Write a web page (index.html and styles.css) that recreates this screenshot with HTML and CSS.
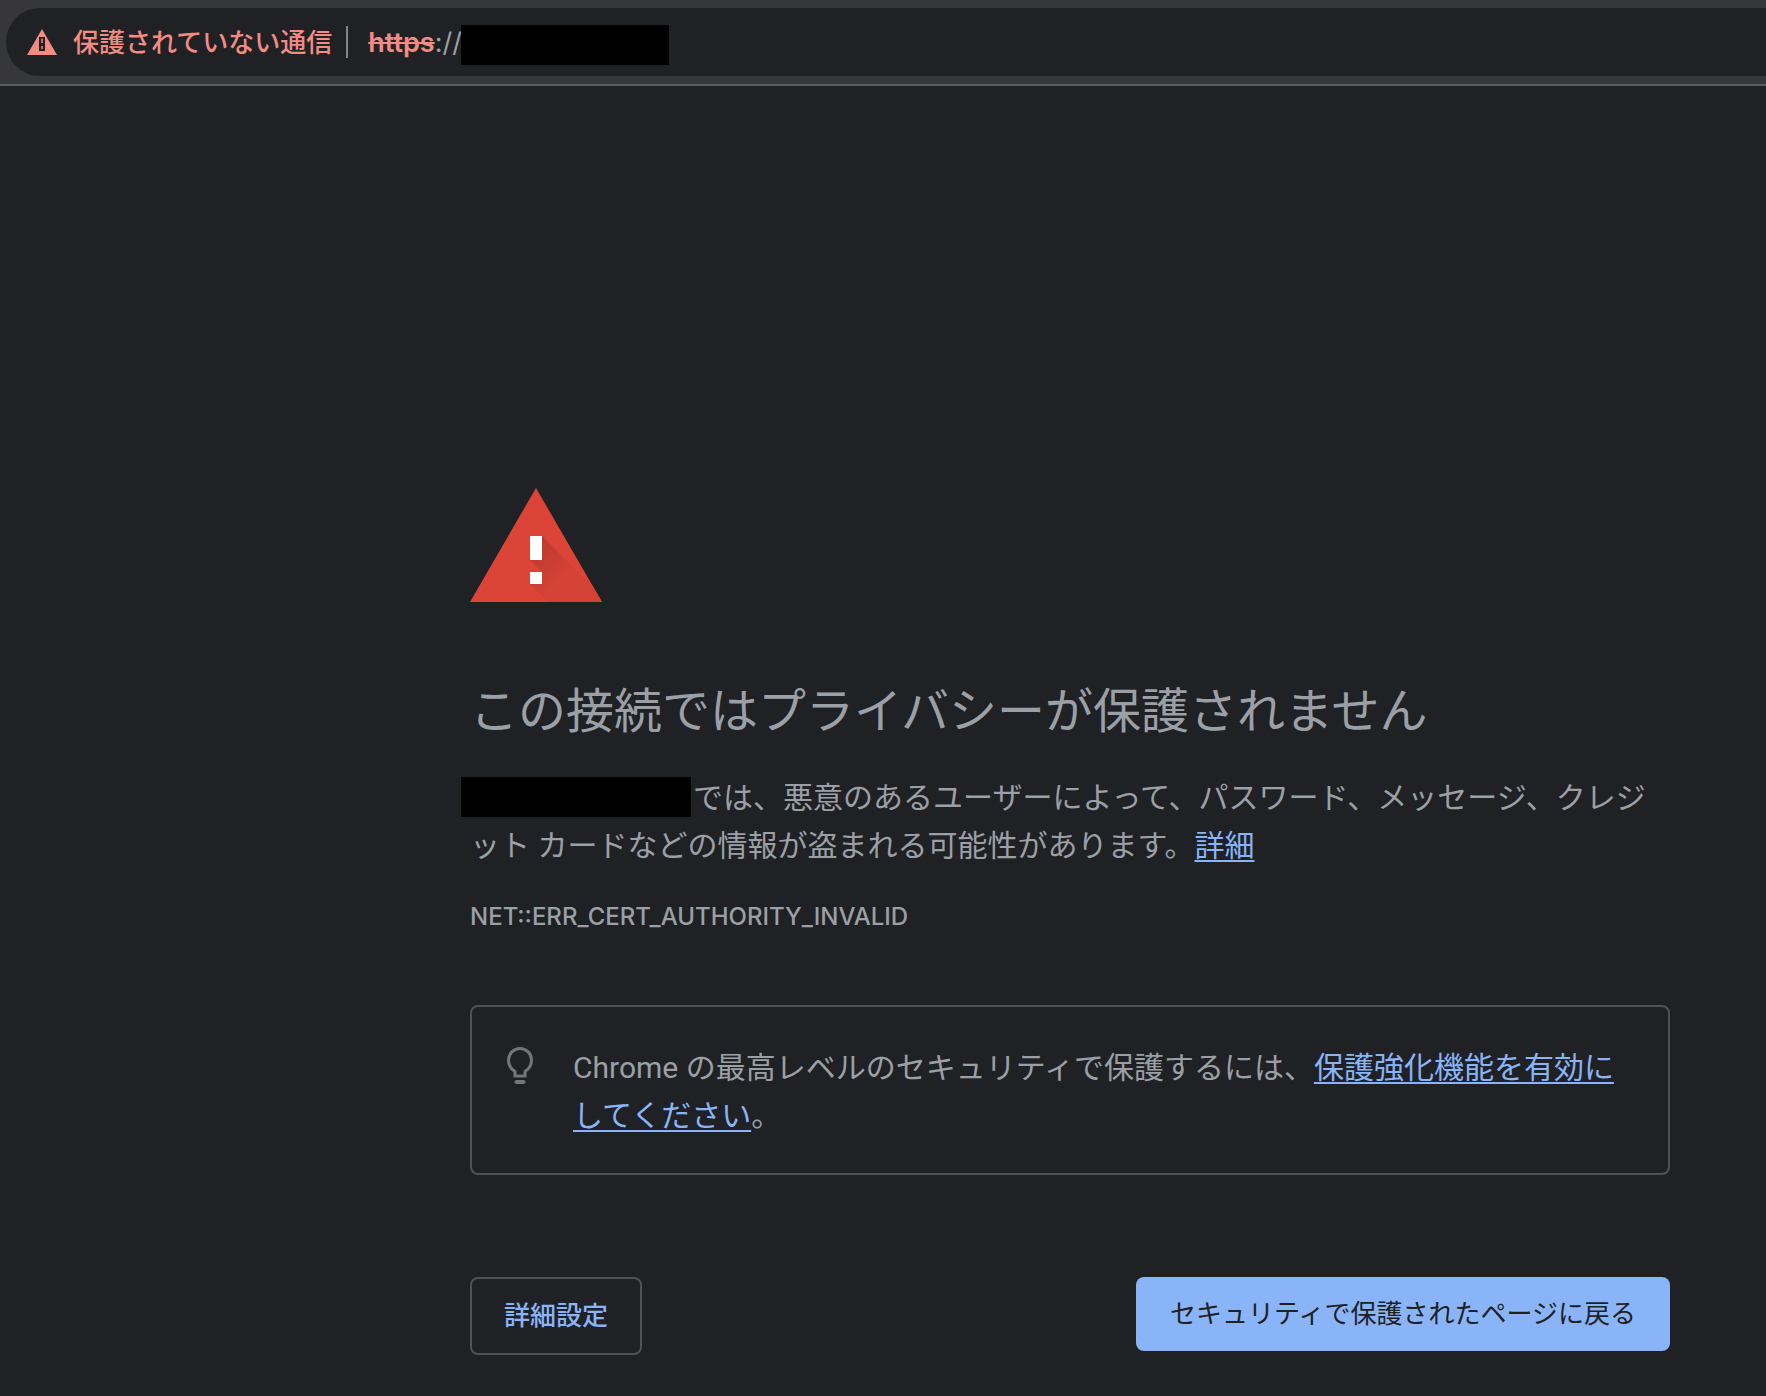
FILE: index.html
```html
<!DOCTYPE html>
<html lang="ja">
<head>
<meta charset="utf-8">
<title>プライバシー エラー</title>
<link rel="stylesheet" href="styles.css">
</head>
<body>
<header class="toolbar">
  <div class="omnibox">
    <svg class="omnibox-icon" viewBox="0 0 30 26" aria-hidden="true">
      <path fill="#f28b82" d="M15 0 30 26H0Z"/>
      <path fill="#202124" d="M12 8H18V22H12Z"/>
      <path fill="#f28b82" opacity=".75" d="M14 9.500H16V14H14ZM14 17H16V20H14Z"/>
    </svg>
    <span class="security-label">保護されていない通信</span>
    <span class="divider"></span>
    <span class="url"><s class="scheme">https</s>://</span>
    <span class="redacted redacted-url"></span>
  </div>
</header>
<main class="interstitial">
  <svg class="warning-icon" viewBox="0 0 132 114" aria-hidden="true">
    <defs>
      <linearGradient id="shade" gradientUnits="userSpaceOnUse" x1="62" y1="62" x2="90" y2="90">
        <stop offset="0" stop-color="#bd3a2f"/>
        <stop offset="1" stop-color="#d34235"/>
      </linearGradient>
    </defs>
    <path fill="#db4437" d="M66 0 132 114H0Z"/>
    <path fill="url(#shade)" d="M72 48 103 79 123 98.500 132 114H78L60 96 72 84 60 72Z"/>
    <path fill="#fff" d="M60 48H72V72H60ZM60 84H72V96H60Z"/>
  </svg>
  <h1 class="title">この接続ではプライバシーが保護されません</h1>
  <p class="message"><span class="redacted redacted-host"></span>では、悪意のあるユーザーによって、パスワード、メッセージ、クレジット カードなどの情報が盗まれる可能性があります。<a href="#details">詳細</a></p>
  <p class="error-code">NET::ERR_CERT_AUTHORITY_INVALID</p>
  <section class="tip">
    <svg class="bulb" viewBox="0 0 26 38" fill="none" stroke="#757575" stroke-width="3" aria-hidden="true">
      <path d="M8 29V24.500C4 22 1.500 18 1.500 13A11.500 11.500 0 0 1 24.500 13C24.500 18 22 22 18 24.500V29Z"/>
      <path d="M9.500 35H16.500" stroke-width="4" stroke-linecap="round"/>
    </svg>
    <p class="tip-text">Chrome の最高レベルのセキュリティで保護するには、<a href="#enhanced">保護強化機能を有効にしてください</a>。</p>
  </section>
  <div class="actions">
    <button type="button" class="button secondary">詳細設定</button>
    <button type="button" class="button primary">セキュリティで保護されたページに戻る</button>
  </div>
</main>
</body>
</html>
```
FILE: styles.css
```css
* {
  box-sizing: border-box;
}

body {
  margin: 0;
  background: #202124;
  color: #9aa0a6;
  font-family: Roboto, "Noto Sans CJK JP", sans-serif;
  font-size: 30px;
  line-height: 48px;
}

a {
  color: #8ab4f8;
  text-decoration: underline;
  text-decoration-thickness: 2px;
  text-underline-offset: 4px;
}

.toolbar {
  padding: 8px 0 8px 6px;
  background: #37363a;
  border-bottom: 2px solid #5c5c5f;
}

.omnibox {
  display: flex;
  align-items: center;
  height: 68px;
  padding-left: 21px;
  border-radius: 34px 0 0 34px;
  background: #202124;
  white-space: nowrap;
}

.omnibox-icon {
  width: 30px;
  height: 26px;
}

.security-label,
.url {
  margin-top: 2px;
}

.security-label {
  margin-left: 16px;
  color: #f28b82;
  font-size: 26px;
  font-weight: 500;
}

.divider {
  width: 2px;
  height: 32px;
  margin: 0 20px 0 14px;
  background: #80868b;
}

.url {
  width: 93px;
  overflow: hidden;
  font-family: Inter, sans-serif;
  font-size: 27px;
}

.scheme {
  color: #f28b82;
  font-weight: 600;
  text-decoration-thickness: 2px;
}

.redacted {
  display: inline-block;
  height: 40px;
  background: #000;
}

.redacted-url {
  width: 208px;
  margin-top: 6px;
}

.interstitial {
  padding: 402px 96px 32px 470px;
}

.warning-icon {
  display: block;
  width: 132px;
  height: 114px;
}

.title {
  margin: 74px 0 0;
  font-size: 48px;
  font-weight: 400;
  line-height: 72px;
}

.message {
  margin: 26px 0 0;
  line-break: loose;
}

.redacted-host {
  width: 230px;
  margin: 0 2px 0 -9px;
  vertical-align: -9px;
}

.error-code {
  margin: 23px 0 0;
  font-family: Inter, sans-serif;
  font-size: 24px;
  font-weight: 500;
}

.tip {
  display: flex;
  gap: 40px;
  margin-top: 64px;
  padding: 37px 30px 33px 35px;
  border: 2px solid #505154;
  border-radius: 8px;
}

.bulb {
  flex: none;
  width: 26px;
  height: 38px;
  margin-top: 3px;
}

.tip-text {
  margin: 0;
}

.actions {
  display: flex;
  justify-content: space-between;
  align-items: flex-start;
  margin-top: 102px;
}

.button {
  border-radius: 8px;
  font-family: inherit;
  font-size: 26px;
  line-height: 74px;
  cursor: pointer;
}

.secondary {
  padding: 0 32px;
  border: 2px solid #505154;
  background: transparent;
  color: #8ab4f8;
  font-weight: 500;
}

.primary {
  padding: 0 34px;
  border: 0;
  background: #8ab4f8;
  color: #202124;
}
```
